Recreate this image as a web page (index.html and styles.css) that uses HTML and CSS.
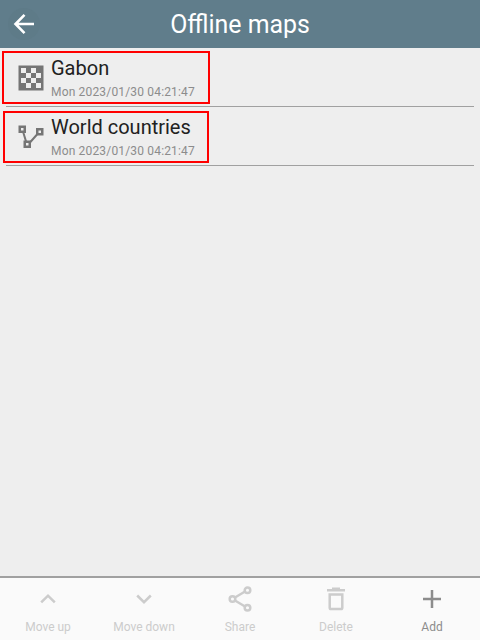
FILE: index.html
```html
<!DOCTYPE html>
<html lang="en">
<head>
<meta charset="utf-8">
<title>Offline maps</title>
<link rel="stylesheet" href="styles.css">
</head>
<body>
<header class="bar">
  <svg class="back" width="48" height="48" viewBox="0 0 48 48"><circle cx="24" cy="24" r="16" fill="#5e7b88"/><path d="M34 24H16M24.500 14.800L15.500 24L24.500 33.200" fill="none" stroke="#fff" stroke-width="2.600"/></svg>
  <h1 class="title">Offline maps</h1>
</header>
<main class="list">
  <div class="row">
    <svg class="icon" width="26" height="26" viewBox="0 0 26 26"><path fill="#757575" d="M.5 .5H25.500V25.500H.5Z"/><path fill="#eee" d="M3 3h5v5h-5zM13 3h5v5h-5zM8 8h5v5h-5zM18 8h5v5h-5zM3 13h5v5h-5zM13 13h5v5h-5zM8 18h5v5h-5zM18 18h5v5h-5z"/></svg>
    <div class="text"><div class="name">Gabon</div><div class="date">Mon 2023/01/30 04:21:47</div></div>
    <span class="mark mark-first"></span>
  </div>
  <div class="row">
    <svg class="icon" width="26" height="26" viewBox="0 0 26 26" fill="none" stroke="#757575" stroke-width="2"><path d="M5 7.500L8.200 18M19 10.500L11.500 19"/><path stroke-width="2.500" d="M1.750 2.750h5v5h-5zM19.250 5.250h5v5h-5zM6.750 17.750h5v5h-5z"/></svg>
    <div class="text"><div class="name">World countries</div><div class="date">Mon 2023/01/30 04:21:47</div></div>
    <span class="mark mark-second"></span>
  </div>
</main>
<footer class="tools">
  <div class="tool off"><svg width="32" height="32" viewBox="0 0 32 32"><path d="M9.200 19.400L16 12.700L22.800 19.400"/></svg><span>Move up</span></div>
  <div class="tool off"><svg width="32" height="32" viewBox="0 0 32 32"><path d="M9.200 12.500L16 19.200L22.800 12.500"/></svg><span>Move down</span></div>
  <div class="tool off"><svg width="32" height="32" viewBox="0 0 32 32"><path d="M11 14.500L21 8.500M11 17.500L21 23.500"/><circle cx="8.500" cy="16" r="2.800"/><circle cx="23.500" cy="7.300" r="2.800"/><circle cx="23.500" cy="24.700" r="2.800"/></svg><span>Share</span></div>
  <div class="tool off"><svg width="32" height="32" viewBox="0 0 32 32"><path d="M7 7.300H25M12 5.700H20"/><path d="M9.700 11.500H22.300V24.800Q22.300 26.100 21 26.100H11Q9.700 26.100 9.700 24.800Z"/></svg><span>Delete</span></div>
  <div class="tool"><svg width="32" height="32" viewBox="0 0 32 32"><path d="M7 16H25M16 7V25"/></svg><span>Add</span></div>
</footer>
</body>
</html>
```
FILE: styles.css
```css
* { box-sizing: border-box; }
body {
  margin: 0;
  height: 640px;
  display: flex;
  flex-direction: column;
  background: #eee;
  font-family: Roboto, sans-serif;
}
.bar {
  height: 48px;
  display: grid;
  grid-template-columns: 48px 1fr 48px;
  align-items: center;
  background: #607d8b;
  color: #fff;
}
.title {
  margin: 0;
  padding-top: 2px;
  text-align: center;
  font-size: 24.9px;
  font-weight: 400;
  line-height: 46px;
}
.list { flex: 1; padding: 0 6px; }
.row {
  position: relative;
  height: 59px;
  display: flex;
  align-items: center;
  gap: 7px;
  padding: 2px 0 0 12px;
  border-bottom: 1px solid #a0a0a0;
}
.icon { display: block; }
.name { font-size: 20px; line-height: 24px; color: #212121; }
.date { font-size: 12px; line-height: 16px; margin-top: 4px; letter-spacing: .17px; color: #8c8c8c; }
.mark { position: absolute; border: 2px solid #f00; }
.mark-first { left: -4px; top: 3px; width: 208px; height: 53px; }
.mark-second { left: -3px; top: 4px; width: 206px; height: 52px; }
.tools {
  height: 64px;
  display: grid;
  grid-template-columns: repeat(5, 1fr);
  background: #fafafa;
  border-top: 2px solid #a0a0a0;
}
.tool {
  display: flex;
  flex-direction: column;
  align-items: center;
  padding-top: 5px;
  gap: 4px;
  color: #8c8c8c;
  font-size: 12px;
  line-height: 16px;
}
.tool svg { fill: none; stroke: currentColor; stroke-width: 2.5; }
.off { color: #ccc; }
```
